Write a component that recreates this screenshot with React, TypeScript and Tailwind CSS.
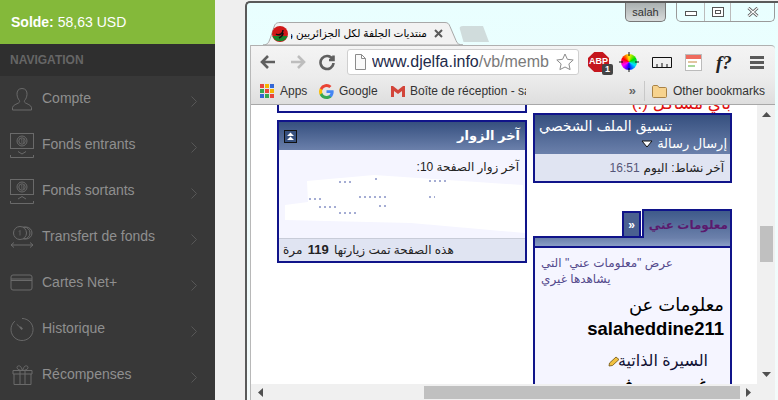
import React from 'react';

const Chevron = () => (
  <svg width="6" height="11" viewBox="0 0 6 11" fill="none" stroke="#575757" strokeWidth="1" className="shrink-0 mt-[4px]">
    <path d="M.5.5l5 5-5 5" />
  </svg>
);

const s = { fill: 'none', stroke: '#6a6a6a', strokeWidth: 1 };

const UserIcon = () => (
  <svg width="24" height="24" viewBox="0 0 24 24" {...s}>
    <path d="M12 1.5c-3.6 0-5.2 2.6-5 5.8.2 2.6 1 4.700 2.300 6 .6.800.4 2-.5 2.500C6.800 17 3 18 2.500 20.500v2.500h19v-2.500C21 18 17.200 17 15.200 15.800c-.9-.5-1.100-1.700-.5-2.500 1.300-1.300 2.100-3.400 2.300-6 .2-3.200-1.400-5.800-5-5.800z" />
  </svg>
);

const MoneyIcon = ({ up }: { up?: boolean }) => (
  <svg width="24" height="25" viewBox="0 0 24 25" {...s}>
    <rect x="0.500" y="0.500" width="23" height="15" />
    <circle cx="12" cy="8" r="5" />
    <circle cx="12" cy="8" r="3.200" />
    <path d="M11 6.500l.8-.6v4.200M13.400 6.200v3.800" strokeWidth="0.700" />
    {up ? <path d="M8 20l4-2.500 4 2.500" /> : <path d="M8 18.500l4 2.500 4-2.500" />}
    <path d="M0.500 22v2.500h23V22" />
  </svg>
);

const TransferIcon = () => (
  <svg width="24" height="24" viewBox="0 0 24 24" {...s}>
    <circle cx="16" cy="8" r="6" />
    <circle cx="14" cy="8" r="6" />
    <circle cx="10" cy="8" r="6.500" fill="#383838" />
    <path d="M10 5.500v5M9 6.500l1-1" strokeWidth="0.800" />
    <path d="M1 20h22M4 17.500L1 20l3 2.500M20 17.500l3 2.500-3 2.500" />
  </svg>
);

const CardIcon = () => (
  <svg width="24" height="18" viewBox="0 0 24 18" {...s}>
    <rect x="1" y="1" width="21" height="15" rx="2" />
    <path d="M1 5h21M1 6.500h21" />
  </svg>
);

const ClockIcon = () => (
  <svg width="25" height="25" viewBox="0 0 25 25" {...s}>
    <path d="M12.500 1a11.500 11.500 0 1 1-7.500 2.800" />
    <path d="M7 7l5.500 5" />
    <path d="M10.500 9.800l2.300 2.600" strokeWidth="2" />
  </svg>
);

const GiftIcon = () => (
  <svg width="21" height="20" viewBox="0 0 21 20" {...s}>
    <path d="M1 5.500h19v3.500H1zM2 9v10.500h17V9M8 5.500v14M13 5.500v14" />
    <path d="M10.500 5.500C8 5.500 5 4.500 5 2.500S7.500.5 8.500 1.500s2 4 2 4zm0 0c2.500 0 5.500-1 5.500-3s-2.500-2-3.500-1-2 4-2 4z" />
  </svg>
);

const navItems: { label: string; icon: React.ReactNode }[] = [
  { label: 'Compte', icon: <UserIcon /> },
  { label: 'Fonds entrants', icon: <MoneyIcon /> },
  { label: 'Fonds sortants', icon: <MoneyIcon up /> },
  { label: 'Transfert de fonds', icon: <TransferIcon /> },
  { label: 'Cartes Net+', icon: <CardIcon /> },
  { label: 'Historique', icon: <ClockIcon /> },
  { label: 'Récompenses', icon: <GiftIcon /> },
];

const Sidebar = () => (
  <aside className="w-[215px] shrink-0 flex flex-col bg-[#383838] overflow-hidden">
    <div className="h-[44px] shrink-0 bg-[#84b93a] flex items-center pl-[11px] text-[14px] text-white">
      <b className="mr-[4px]">Solde:</b> 58,63 USD
    </div>
    <div className="h-[32px] shrink-0 bg-[#2f2f2f] flex items-center pl-[10px] text-[12px] font-bold text-[#666666]">
      NAVIGATION
    </div>
    {navItems.map((item) => (
      <div key={item.label} className="h-[46px] shrink-0 flex items-center pl-[10px] pr-[18px]">
        <div className="w-[24px] flex justify-center mr-[8px]">{item.icon}</div>
        <span className="flex-1 text-[14px] text-[#8f8f8f] -mt-[2px]">{item.label}</span>
        <Chevron />
      </div>
    ))}
  </aside>
);

const WindowControls = () => (
  <div className="flex items-start gap-[10px] mr-[3px]">
    <div className="w-[41px] h-[19px] rounded-b-[5px] border border-t-0 border-[#777777] bg-gradient-to-b from-[#aab0b0] to-[#d8dcdc] flex items-center justify-center text-[11px] text-[#333333]">
      salah
    </div>
    <div className="w-[99px] h-[19px] rounded-b-[5px] border border-t-0 border-[#9a9a9a] flex">
      <div className="w-[28px] border-r border-[#bbbbbb] flex items-center justify-center">
        <div className="w-[12px] h-[5px] mt-[3px] border border-[#555555] bg-white" />
      </div>
      <div className="w-[26px] border-r border-[#bbbbbb] flex items-center justify-center">
        <div className="w-[12px] h-[10px] border border-[#555555] flex items-center justify-center bg-white">
          <div className="w-[6px] h-[4px] border border-[#555555]" />
        </div>
      </div>
      <div className="flex-1 flex items-center justify-center">
        <svg width="12" height="10" viewBox="0 0 12 10" fill="none">
          <path d="M1.500 1l9 8M10.500 1l-9 8" stroke="#555555" strokeWidth="3" />
          <path d="M1.500 1l9 8M10.500 1l-9 8" stroke="#ffffff" strokeWidth="1.200" />
        </svg>
      </div>
    </div>
  </div>
);

const TabStrip = () => (
  <div className="relative flex items-end pl-[15px]">
    <div className="relative w-[200px] h-[23px] flex items-center pl-[9px] pr-[20px]">
      <svg width="200" height="23" viewBox="0 0 200 23" className="absolute left-0 top-0">
        <path d="M0 23C5 23 6 20 8 14L11 5C12 2 13 .5 17 .5H182c3 0 4 1.500 5 4l6 14c1 3 3 4.500 7 4.500z" fill="#f2f2f2" stroke="#a8a8a8" />
      </svg>
      <svg width="16" height="16" viewBox="0 0 16 16" className="relative shrink-0">
        <circle cx="8" cy="8" r="8" fill="#d01818" />
        <path d="M0.500 10a8 8 0 0 0 15 0z" fill="#17862c" />
        <path d="M4 8c3 2 7 0 7-4M7 12c2-1 4-2 4-5" stroke="#111111" strokeWidth="1.500" fill="none" />
      </svg>
      <span dir="rtl" className="relative flex-1 overflow-hidden whitespace-nowrap text-[10.500px] text-black ml-[3px]">
        منتديات الجلفة لكل الجزائريين و العرب
      </span>
      <svg width="9" height="9" viewBox="0 0 9 9" stroke="#5a5a5a" strokeWidth="2" className="relative shrink-0 ml-[7px]">
        <path d="M1 1l7 7M8 1L1 8" />
      </svg>
    </div>
    <div className="w-[30px] h-[16px] mb-[3px] -ml-[4px] rounded-t-[4px] bg-[#d0dcdc] [clip-path:polygon(0_0,80%_0,100%_100%,15%_100%)]" />
  </div>
);

const IconButton = ({ d, color, width = 18 }: { d: string; color: string; width?: number }) => (
  <svg width={width} height="18" viewBox="0 0 18 18" fill="none" stroke={color} strokeWidth="2.600">
    <path d={d} />
  </svg>
);

const Toolbar = () => (
  <div className="h-[33px] shrink-0 flex items-center pl-[8px] pr-[10px] rounded-tr-[4px] bg-gradient-to-b from-[#f4f4f4] to-[#ececec] border-t border-[#b0b0b0]">
    <IconButton d="M16 9H3M9 3L3 9l6 6" color="#5f5f5f" />
    <div className="w-[12px]" />
    <IconButton d="M2 9h13M9 3l6 6-6 6" color="#bdbdbd" />
    <div className="w-[11px]" />
    <IconButton d="M14.500 6A6.500 6.500 0 1 0 15.500 10M15.500 2.500V7H11" color="#5f5f5f" />
    <div className="w-[11px]" />
    <div className="w-[232px] h-[26px] shrink-0 flex items-center bg-white border border-[#cfcfcf] rounded-[3px] pl-[6px] pr-[4px] overflow-hidden">
      <svg width="13" height="16" viewBox="0 0 13 16" fill="#fafafa" stroke="#8c8c8c" className="shrink-0 mr-[5px]">
        <path d="M1.500.5h6l4 4v11h-10zM7.500.5v4h4" />
      </svg>
      <span className="flex-1 overflow-hidden whitespace-nowrap text-[16px] text-[#1e2a4a]">
        www.djelfa.info<span className="text-[#7a7a7a]">/vb/memb</span>
      </span>
      <svg width="18" height="18" viewBox="0 0 18 18" fill="none" stroke="#8c8c8c" className="shrink-0">
        <path d="M9 1l2.400 5.300 5.800.7-4.300 3.900 1.200 5.700L9 14l-5.100 2.600 1.200-5.700L.8 7l5.800-.7z" />
      </svg>
    </div>
    <div className="relative ml-[9px] w-[21px] h-[20px] shrink-0 bg-[#c5161d] flex items-center justify-center text-[9px] font-bold text-white [clip-path:polygon(30%_0,70%_0,100%_30%,100%_70%,70%_100%,30%_100%,0_70%,0_30%)]">
      ABP
    </div>
    <div className="w-[11px] h-[11px] -ml-[7px] mt-[15px] shrink-0 z-10 rounded-[2px] bg-[#444444] flex items-center justify-center text-[9px] font-bold text-white">
      1
    </div>
    <svg width="20" height="20" viewBox="0 0 20 20" className="ml-[6px] shrink-0">
      <foreignObject x="2" y="2" width="16" height="16">
        <div className="w-[16px] h-[16px] rounded-full bg-[conic-gradient(#ffee00,#00e000,#00e0ff,#0000ff,#ff00ff,#ff0000,#ffee00)]" />
      </foreignObject>
      <path d="M10 0v20M0 10h20" stroke="#111111" strokeWidth="1" strokeDasharray="4 12" />
    </svg>
    <svg width="20" height="11" viewBox="0 0 20 11" fill="none" stroke="#111111" className="ml-[13px] shrink-0">
      <path d="M.5.5h19v10H.5zM5 10.500V7M10 10.500V6M15 10.500V7" />
    </svg>
    <div className="ml-[13px] w-[17px] h-[17px] shrink-0 bg-white border border-[#bbbbbb] flex flex-col gap-[2px]">
      <div className="h-[4px] bg-[#ef6b5e]" />
      <div className="h-[2px] w-[9px] ml-[2px] bg-[#e2c5a0]" />
      <div className="h-[2px] w-[7px] ml-[2px] bg-[#a9d89a]" />
    </div>
    <div className="ml-[14px] w-[20px] shrink-0 font-['Liberation_Serif',serif] italic font-bold text-[19px] leading-none text-[#222222]">f?</div>
    <div className="ml-[14px] w-[14px] shrink-0 flex flex-col gap-[2px]">
      <div className="h-[3px] bg-[#5a5a5a]" />
      <div className="h-[3px] bg-[#5a5a5a]" />
      <div className="h-[3px] bg-[#5a5a5a]" />
    </div>
  </div>
);

const BookmarksBar = () => (
  <div className="h-[27px] shrink-0 flex items-center pl-[9px] pr-[10px] text-[12px] text-[#333333] bg-gradient-to-b from-[#ececec] to-[#dedede] border-b border-[#a8a8a8]">
    <div className="grid grid-cols-3 gap-[1px] w-[14px] shrink-0 mr-[6px]">
      {['#e8453c', '#f4b400', '#3367d6', '#34a853', '#e8453c', '#f4b400', '#3367d6', '#34a853', '#e8453c'].map((c, i) => (
        <div key={i} className="h-[4px]" style={{ backgroundColor: c }} />
      ))}
    </div>
    <span className="w-[39px] shrink-0">Apps</span>
    <svg width="15" height="15" viewBox="0 0 18 18" className="shrink-0 mr-[5px]">
      <path d="M17.600 9.200c0-.6-.1-1.200-.2-1.800H9v3.500h4.800a4.100 4.100 0 0 1-1.800 2.700v2.200h2.900c1.700-1.600 2.700-3.900 2.700-6.600z" fill="#4285f4" />
      <path d="M9 18c2.400 0 4.500-.8 5.900-2.200L12 13.600c-.8.500-1.800.9-3 .9-2.300 0-4.300-1.600-5-3.700H1v2.300A9 9 0 0 0 9 18z" fill="#34a853" />
      <path d="M4 10.700a5.400 5.400 0 0 1 0-3.400V5H1a9 9 0 0 0 0 8z" fill="#fbbc05" />
      <path d="M9 3.600c1.300 0 2.500.5 3.400 1.300L15 2.400A9 9 0 0 0 1 5l3 2.300c.7-2.100 2.700-3.700 5-3.700z" fill="#ea4335" />
    </svg>
    <span className="w-[52px] shrink-0">Google</span>
    <svg width="14" height="11" viewBox="0 0 14 11" className="shrink-0 mr-[5px]">
      <path d="M0 0h2l5 4 5-4h2v11h-3V5L7 8 3 5v6H0z" fill="#d2453a" />
    </svg>
    <span className="w-[116px] shrink-0 overflow-hidden whitespace-nowrap">Boîte de réception - salah</span>
    <div className="flex-1" />
    <span className="text-[#666666] font-bold text-[13px] mr-[8px]">»</span>
    <div className="w-px h-[20px] bg-[#c8c8c8] mr-[7px]" />
    <svg width="15" height="13" viewBox="0 0 15 13" fill="#f7d38e" stroke="#a98246" className="shrink-0 mr-[6px]">
      <path d="M.5 2c0-1 .5-1.500 1.500-1.500h3.500l1.500 2h6.500c.6 0 1 .4 1 1v8c0 .6-.4 1-1 1h-12c-.6 0-1-.4-1-1z" />
    </svg>
    <span className="whitespace-nowrap">Other bookmarks</span>
  </div>
);

const VisitorsBox = () => (
  <div className="relative w-[250px] h-[143px] flex flex-col border-2 border-[#10148a] bg-[#f5f5ff]" dir="rtl">
    <div className="h-[28px] shrink-0 flex items-center justify-between px-[5px] bg-gradient-to-b from-[#36507f] to-[#6b80ab] text-white text-[13px] font-bold">
      <span>آخر الزوار</span>
      <svg width="13" height="13" viewBox="0 0 13 13" className="shrink-0">
        <rect x=".5" y=".5" width="12" height="12" fill="#36507f" stroke="#111111" />
        <path d="M3 6l3.500-3.500L10 6zM3 10l3.500-3.500L10 10z" fill="#ffffff" />
      </svg>
    </div>
    <div className="flex-1 px-[6px] pt-[8px] text-[12px] text-[#222222]">آخر زوار الصفحة 10:</div>
    <div className="h-[23px] shrink-0 flex items-center justify-end px-[4px] bg-[#e0e4f2] border-t border-[#c8ccd8] text-[12px] text-[#222222]">
      <span>هذه الصفحة تمت زيارتها <b className="mx-[2px] text-[13px]">119</b> مرة</span>
    </div>
    <svg width="246" height="70" viewBox="0 0 246 70" className="absolute left-0 top-[51px]">
      <path d="M6 47V32L29 29 28 8 95 2 244 12 246 60 132 50Z" fill="#ffffff" />
      <path d="M60 9h12M96 6h4M150 8h20M30 26h12M80 24h30M150 24h6M40 34h20M100 33h8M60 40h20" stroke="#4a5aa8" strokeWidth="1" strokeDasharray="2 3" />
    </svg>
  </div>
);

const ProfileBox = () => (
  <div className="w-[199px] h-[70px] flex flex-col border-2 border-[#10148a] bg-[#e0e4f2]" dir="rtl">
    <div className="h-[39px] shrink-0 pr-[3px] pl-[4px] pt-[2px] bg-gradient-to-b from-[#36507f] to-[#6b80ab] text-white text-[13px] leading-[18px]">
      <div className="text-[14px] whitespace-nowrap text-left">تنسيق الملف الشخصي</div>
      <div className="flex items-center gap-[4px]">
        <span>إرسال رسالة</span>
        <svg width="12" height="8" viewBox="0 0 12 8" fill="white" stroke="#111111">
          <path d="M1 1h10L6 7z" />
        </svg>
      </div>
    </div>
    <div className="flex-1 flex items-center pr-[6px] text-[12px] text-[#222222]">
      آخر نشاط: اليوم <span className="mr-[4px] text-[#555577]">16:51</span>
    </div>
  </div>
);

const AboutBox = () => (
  <div className="w-[199px] flex flex-col">
    <div className="flex">
      <div className="flex-1 h-[29px] border-b-2 border-[#10148a] flex items-end justify-end pr-[1px]">
        <div className="w-[19px] h-[25px] border-2 border-b-0 border-[#10148a] bg-[#4a6090] flex items-center justify-center text-[12px] leading-none font-bold text-white">»</div>
      </div>
      <div className="w-[90px] h-[29px] border-2 border-b-0 border-[#10148a] bg-gradient-to-b from-[#3f5a8a] to-[#6b80ab] flex items-center pr-[2px] text-[12px] font-bold text-[#5b1a6e] whitespace-nowrap" dir="rtl">
        معلومات عني
      </div>
    </div>
    <div className="h-[10px] border-2 border-t-0 border-[#10148a] bg-gradient-to-b from-[#6b80ab] to-[#8a9ec5]" />
    <div className="h-[136px] overflow-hidden border-x-2 border-[#10148a] bg-[#f5f5ff] px-[6px] pt-[7px]" dir="rtl">
      <p className="mr-auto text-left text-[12px] leading-[16px] text-[#544a8c] w-[136px]">عرض "معلومات عني" التي يشاهدها غيري</p>
      <p className="mt-[6px] text-[18px] leading-[24px] text-black">معلومات عن</p>
      <p className="text-[18.500px] leading-[26px] font-bold text-black -mt-[1px]">salaheddine211</p>
      <div className="mt-[6px] pr-[16px] flex items-center gap-[2px] text-[16px] leading-[26px] text-[#111133]">
        <span>السيرة الذاتية</span>
        <svg width="12" height="11" viewBox="0 0 12 11" className="shrink-0 -mr-[4px]">
          <path d="M1 10l.5-3L8 1l3 2.500-6.500 6z" fill="#f0c040" stroke="#6e5210" strokeWidth="0.800" />
        </svg>
      </div>
      <p className="pr-[16px] -mt-[1px] text-[20px] leading-[24px] text-black">غير معروف</p>
    </div>
  </div>
);

const Arrow = ({ points }: { points: string }) => (
  <svg width="9" height="9" viewBox="0 0 9 9" fill="#505050">
    <polygon points={points} />
  </svg>
);

const BrowserPage = () => (
  <div className="flex-1 min-h-0 flex flex-col bg-white">
    <div className="flex-1 min-h-0 flex">
      <div className="flex-1 flex overflow-hidden pl-[26px] gap-[6px]">
        <div className="flex flex-col gap-[7px]">
          <div className="w-[250px] h-[8px] shrink-0 border-2 border-t-0 border-[#10148a] bg-[#f5f5ff]" />
          <VisitorsBox />
        </div>
        <div className="flex flex-col">
          <div className="h-[8px] shrink-0 overflow-hidden">
            <div dir="rtl" className="-mt-[10px] pr-[1px] text-[17px] leading-[17px] text-[#e01010] whitespace-nowrap">بأي مشاكل (:)</div>
          </div>
          <ProfileBox />
          <div className="h-[26px] shrink-0" />
          <AboutBox />
        </div>
      </div>
      <div className="w-[18px] shrink-0 bg-[#f0f0f0] flex flex-col items-center pt-[5px] pb-[5px]">
        <Arrow points="0,7 9,7 4.500,2" />
        <div className="h-[107px] shrink-0" />
        <div className="w-[13px] h-[36px] shrink-0 bg-[#c0c0c0]" />
        <div className="flex-1" />
        <Arrow points="0,2 9,2 4.500,7" />
      </div>
    </div>
    <div className="h-[16px] shrink-0 bg-[#f0f0f0] flex items-center pl-[5px]">
      <Arrow points="7,0 7,9 2,4.500" />
      <div className="w-[159px] shrink-0" />
      <div className="w-[316px] h-[13px] shrink-0 bg-[#c0c0c0]" />
      <div className="ml-[4px]">
        <Arrow points="2,0 2,9 7,4.500" />
      </div>
    </div>
  </div>
);

const App: React.FC = () => (
  <div className="w-[778px] h-[400px] flex overflow-hidden bg-[#f0f0f0] font-['Liberation_Sans','DejaVu_Sans',sans-serif]">
    <Sidebar />
    <div className="w-[30px] shrink-0 bg-[#efefef]" />
    <div className="flex-1 mt-[1px] flex flex-col rounded-tl-[5px] border-l-2 border-t-2 border-[#5a5a5a] bg-gradient-to-b from-[#e9ffff] to-[#f4fafa]">
      <div className="h-[42px] shrink-0 flex items-end justify-between pl-[1px]">
        <TabStrip />
        <div className="self-start">
          <WindowControls />
        </div>
      </div>
      <div className="flex-1 min-h-0 ml-[3px] mr-[3px] flex flex-col border-l border-[#b8b8b8]">
        <Toolbar />
        <BookmarksBar />
        <BrowserPage />
      </div>
    </div>
  </div>
);

export default App;
